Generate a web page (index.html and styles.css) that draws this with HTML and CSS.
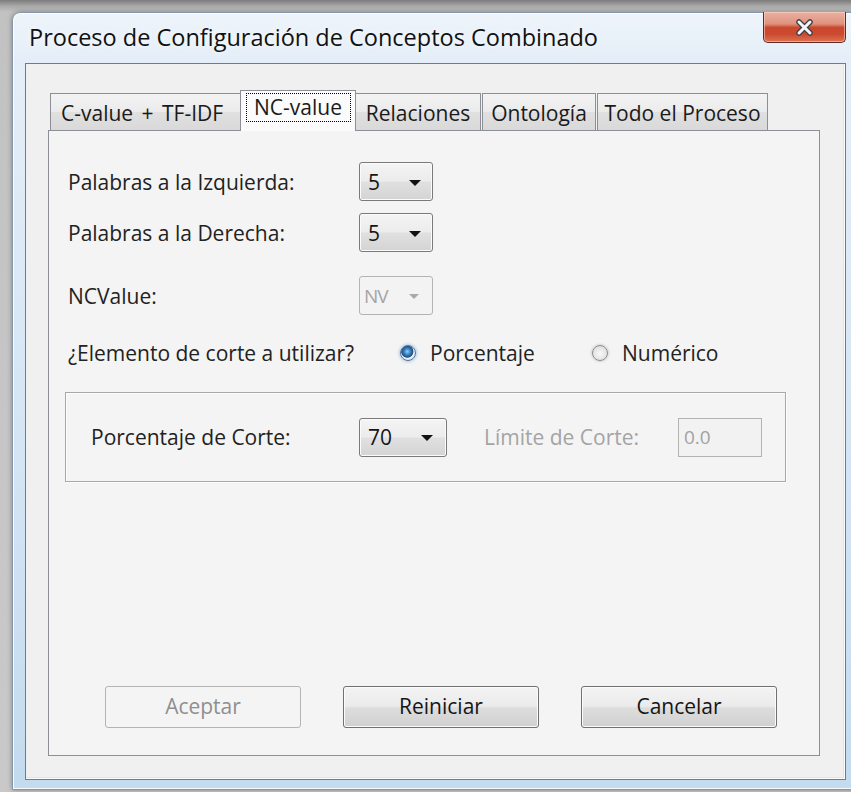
FILE: index.html
```html
<!DOCTYPE html>
<html lang="es">
<head>
<meta charset="utf-8">
<title>Proceso de Configuración de Conceptos Combinado</title>
<link rel="stylesheet" href="styles.css">
</head>
<body>
<div class="window">
  <div class="titlebar">
    <span class="title">Proceso de Configuración de Conceptos Combinado</span>
    <button class="close" type="button" aria-label="Cerrar">
      <svg width="19" height="17" viewBox="0 0 19 17">
        <path d="M4 3 L15 14 M15 3 L4 14" stroke="#3c4046" stroke-width="5.5" stroke-linecap="round"/>
        <path d="M4 3 L15 14 M15 3 L4 14" stroke="#f4f6f8" stroke-width="3" stroke-linecap="round"/>
      </svg>
    </button>
  </div>

  <div class="client">
    <div class="tabs">
      <div class="tab tab-cvalue">C-value + TF-IDF</div>
      <div class="tab tab-ncvalue is-active"><span class="focus">NC-value</span></div>
      <div class="tab tab-relaciones">Relaciones</div>
      <div class="tab tab-ontologia">Ontología</div>
      <div class="tab tab-todo">Todo el Proceso</div>
    </div>

    <div class="panel">
      <div class="field-row row-izq">
        <span class="label">Palabras a la Izquierda:</span>
        <div class="combo combo-num"><span class="combo-value">5</span><i class="arrow"></i></div>
      </div>

      <div class="field-row row-der">
        <span class="label">Palabras a la Derecha:</span>
        <div class="combo combo-num"><span class="combo-value">5</span><i class="arrow"></i></div>
      </div>

      <div class="field-row row-nc">
        <span class="label">NCValue:</span>
        <div class="combo combo-num is-disabled"><span class="combo-value">NV</span><i class="arrow"></i></div>
      </div>

      <div class="radio-row">
        <span class="label label-radio">¿Elemento de corte a utilizar?</span>
        <label class="radio radio-first"><span class="radio-dot is-checked"></span><span class="radio-text">Porcentaje</span></label>
        <label class="radio"><span class="radio-dot"></span><span class="radio-text">Numérico</span></label>
      </div>

      <div class="group">
        <span class="label label-group">Porcentaje de Corte:</span>
        <div class="combo combo-pct"><span class="combo-value">70</span><i class="arrow"></i></div>
        <span class="label label-limite">Límite de Corte:</span>
        <div class="textbox">0.0</div>
      </div>

      <div class="buttons">
        <button class="btn is-disabled" type="button">Aceptar</button>
        <button class="btn" type="button">Reiniciar</button>
        <button class="btn" type="button">Cancelar</button>
      </div>
    </div>
  </div>
</div>
</body>
</html>
```

FILE: styles.css
```css
* {
  box-sizing: border-box;
}

html,
body {
  margin: 0;
}

body {
  width: 851px;
  height: 792px;
  overflow: hidden;
  padding: 12px 0 0 12px;
  background: linear-gradient(to bottom, #7c7c7c 0, #a9a9a9 6px, #c2c2c2 12px, #c9c9c9 100%);
  font-family: "Open Sans", "Noto Sans", sans-serif;
  color: #222;
}

/* ---------- window frame ---------- */

.window {
  width: 847px;
  height: 778px;
  display: flex;
  flex-direction: column;
  padding: 0 12px 9px 12px;
  border: 1px solid #8796a6;
  border-radius: 8px 8px 0 0;
  background: linear-gradient(to bottom, #eef4fa 0, #e4eef8 50px, #d3e4f4 60%, #c3dbef 100%);
  box-shadow: inset 0 0 0 1px rgba(255, 255, 255, 0.85), 0 0 5px rgba(0, 0, 0, 0.35);
}

.titlebar {
  height: 50px;
  flex: none;
  display: flex;
  align-items: center;
}

.title {
  padding-left: 4px;
  padding-bottom: 2px;
  font-size: 23.5px;
  color: #111;
  text-shadow: 0 0 6px rgba(255, 255, 255, 0.9);
  white-space: nowrap;
}

.close {
  margin-left: auto;
  align-self: flex-start;
  margin-top: -1px;
  width: 83px;
  height: 31px;
  padding: 0;
  display: flex;
  align-items: center;
  justify-content: center;
  border: 1px solid #5e2a22;
  border-top: none;
  border-radius: 0 0 5px 5px;
  background: linear-gradient(to bottom, #eab1a3 0%, #df917d 40%, #c8472d 52%, #cc4b30 75%, #dd7454 100%);
  box-shadow: inset 0 0 0 1px rgba(255, 215, 200, 0.55);
}

.close svg {
  display: block;
  margin-top: 1px;
}

/* ---------- client area ---------- */

.client {
  flex: 1;
  display: flex;
  flex-direction: column;
  padding: 26px 25px 23px 22px;
  border: 1px solid #6f7b87;
  background: #f0f0f0;
  box-shadow: inset -1px -1px 0 #fbfbfb, inset -2px -2px 0 #f3dde3;
}

/* ---------- tabs ---------- */

.tabs {
  height: 40px;
  flex: none;
  display: flex;
  align-items: flex-end;
  gap: 1px;
  padding-left: 2px;
  position: relative;
  z-index: 1;
}

.tab {
  height: 37px;
  display: flex;
  align-items: center;
  justify-content: center;
  padding-top: 1px;
  border: 1px solid #8c8f96;
  border-bottom: none;
  background: linear-gradient(to bottom, #f3f3f3 0%, #ebebeb 50%, #e0e0e0 51%, #d9d9d9 100%);
  font-size: 21px;
  white-space: nowrap;
  color: #1a1a1a;
}

.tab-cvalue {
  width: 191px;
  justify-content: flex-start;
  padding-left: 10px;
  word-spacing: 3px;
}

.tab-ncvalue { width: 116px; }
.tab-relaciones { width: 126px; }
.tab-ontologia { width: 114px; }
.tab-todo { width: 171px; }

.tab.is-active {
  height: 41px;
  margin: 0 -2px -1px;
  position: relative;
  z-index: 2;
  background: #fbfbfb;
  align-items: flex-start;
  padding: 2px 0 0;
}

.focus {
  display: block;
  width: 105px;
  height: 29px;
  line-height: 26px;
  text-align: center;
  border: 1px dotted #000;
}

/* ---------- tab page ---------- */

.panel {
  flex: 1;
  display: flex;
  flex-direction: column;
  padding: 31px 0 0 16px;
  border: 1px solid #8c8f96;
  background: #f4f4f4;
}

.label {
  font-size: 21px;
  white-space: nowrap;
  color: #222;
}

.field-row {
  height: 39px;
  display: flex;
  align-items: center;
}

.field-row .label {
  width: 294px;
  padding-left: 3px;
}

.row-der { margin-top: 12px; }
.row-nc { margin-top: 24px; }

/* ---------- combo boxes ---------- */

.combo {
  height: 39px;
  display: flex;
  align-items: center;
  padding: 0 11px 0 8px;
  border: 1px solid #7a7a7a;
  border-radius: 3px;
  background: linear-gradient(to bottom, #f4f4f4 0%, #ececec 48%, #e0e0e0 52%, #d4d4d4 100%);
  box-shadow: inset 0 0 0 1px #fbfbfb;
  font-size: 21px;
  color: #151515;
}

.combo-num { width: 74px; }
.combo-pct { width: 88px; padding-right: 13px; }

.combo-value {
  flex: 1;
}

.arrow {
  width: 0;
  height: 0;
  margin-top: 2px;
  border-left: 6px solid transparent;
  border-right: 6px solid transparent;
  border-top: 6px solid #111;
}

.combo.is-disabled {
  border-color: #b1b5b8;
  background: #f3f3f3;
  box-shadow: none;
  color: #a5a5a5;
  padding-left: 4px;
  font-size: 19px;
  letter-spacing: -1px;
}

.combo.is-disabled .arrow {
  border-left-width: 5px;
  border-right-width: 5px;
  border-top: 5px solid #a9a9a9;
  margin-right: 2px;
}

/* ---------- radio choice ---------- */

.radio-row {
  height: 30px;
  margin-top: 23px;
  display: flex;
  align-items: center;
}

.label-radio {
  width: 335px;
  padding-left: 3px;
}

.radio {
  display: flex;
  align-items: center;
  font-size: 21px;
  color: #222;
}

.radio-first {
  width: 192px;
}

.radio-dot {
  width: 16px;
  height: 16px;
  flex: none;
  border-radius: 50%;
  border: 1px solid #8a8e91;
  background: radial-gradient(circle at 50% 55%, #f7f7f7 0, #e6e6e6 55%, #cdcdcd 100%);
  box-shadow: 0 0 2px 1px rgba(190, 190, 190, 0.6);
}

.radio-dot.is-checked {
  border-color: #54718c;
  background: radial-gradient(circle at 45% 40%, #9ccbef 0, #3582c2 28%, #1d4f86 50%, #eef2f6 57%, #d3dae2 100%);
  box-shadow: 0 0 3px 1px rgba(120, 175, 225, 0.6);
}

.radio-text {
  margin-left: 14px;
}

/* ---------- cut-off group ---------- */

.group {
  height: 90px;
  width: 721px;
  margin-top: 24px;
  display: flex;
  align-items: center;
  border: 1px solid #a8a8a8;
  box-shadow: inset 1px 1px 0 #fdfdfd, 1px 1px 0 #fdfdfd;
}

.label-group {
  width: 293px;
  padding-left: 25px;
}

.label-limite {
  width: 194px;
  margin-left: 37px;
  color: #a4a4a4;
}

.textbox {
  width: 84px;
  height: 39px;
  display: flex;
  align-items: center;
  padding-left: 5px;
  border: 1px solid #b3b3b3;
  background: #f2f2f2;
  font-size: 19px;
  color: #a2a2a2;
}

/* ---------- dialog buttons ---------- */

.buttons {
  margin-top: auto;
  margin-bottom: 27px;
  padding-left: 40px;
  display: flex;
  gap: 42px;
}

.btn {
  width: 196px;
  height: 42px;
  padding: 0 0 2px;
  border: 1px solid #707070;
  border-radius: 3px;
  background: linear-gradient(to bottom, #f3f3f3 0%, #ebebeb 48%, #dddddd 52%, #d0d0d0 100%);
  box-shadow: inset 0 0 0 1px #fbfbfb;
  font-family: inherit;
  font-size: 21px;
  color: #151515;
}

.btn.is-disabled {
  border-color: #b4b4b4;
  background: #f4f4f4;
  box-shadow: none;
  color: #8f8f8f;
}
```
